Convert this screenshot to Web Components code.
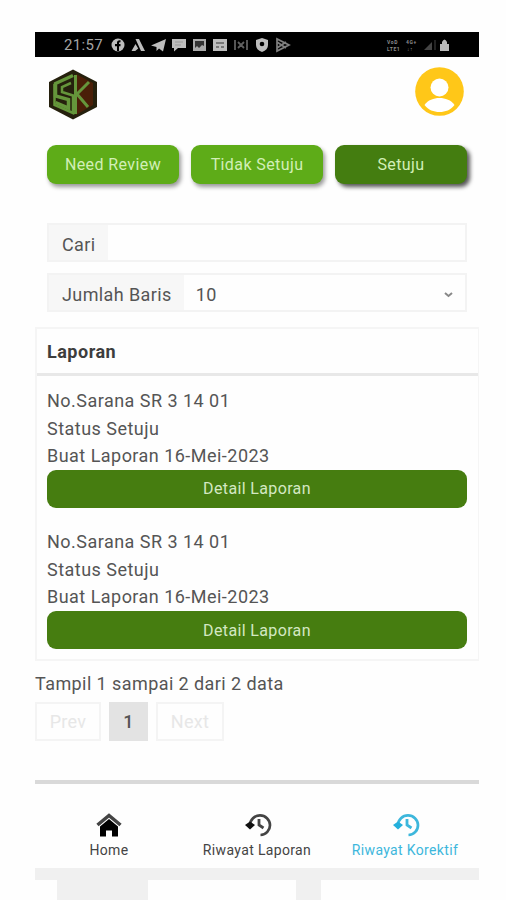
<!DOCTYPE html>
<html lang="id">
<head>
<meta charset="utf-8">
<title>Laporan</title>
<style>
html,body{margin:0;background:#fefefe}
body{width:506px;height:900px;overflow:hidden;font-family:Roboto,"Liberation Sans",sans-serif;color:#555}
</style>
</head>
<body>
<report-app></report-app>
<script>
const define = (name, css, html) => customElements.define(name, class extends HTMLElement {
  connectedCallback() {
    if (this.shadowRoot) return;
    const root = this.attachShadow({mode: 'open'});
    const t = document.createElement('template');
    t.innerHTML = `<style>*{box-sizing:border-box}${css}</style>${typeof html === 'function' ? html(this) : html}`;
    root.append(t.content.cloneNode(true));
  }
});

define('status-bar', `
:host{display:flex;align-items:center;height:25px;background:#000;color:#a5a5a5;padding:0 29px;font-size:15px;line-height:25px;margin-top:32px}
svg{display:block}.time{width:39px;margin-right:8px;padding-top:2px;letter-spacing:.35px}.icons{flex:1}`, `
<span class="time">21:57</span>
<div class="icons"><svg width="186" height="16" viewBox="0 0 186 16" fill="#bdbdbd">
<circle cx="7" cy="8" r="6.5"/><path d="M6 14V9.3H4V7h2V5.6C6 4 7 3 9.5 3.3v2C8.4 5.1 8 5.4 8 6v1h1.5v2.3H8V14z" fill="#000"/>
<path d="M24.500 2h3.500l6 12h-4zM20.500 14l4-7 2.700 4.500-3 2.500z"/>
<path d="M40 8.500L55 2l-3 12.500-4-3-2.500 2.500V10z"/>
<path d="M61 2h14v9h-8l-4 3.500V11h-2z"/><path d="M64 5h8M64 8h6" stroke="#999"/>
<path d="M82 2h13v12H82z" fill="#aaa"/><path d="M84 4h9v5l-2-1-3 3-2-2-2 2z" fill="#333"/>
<path d="M102 2h14v12h-14z"/><path d="M105 5h8v2h-8zm0 4h3v2h-3zm5 0h3v2h-3z" fill="#777"/>
<g fill="none" stroke="#606060" stroke-width="1.800"><path d="M124 3v10M127 5l3 3-3 3M136 3v10M133 5l-3 3 3 3"/></g>
<path d="M151 1l6 2v5c0 3.500-2 5.500-6 7-4-1.500-6-3.500-6-7V3z"/><circle cx="151" cy="7" r="2.300" fill="#000"/>
<path d="M166 2v12l12-6zM166 5l9 6M166 11l9-6" fill="none" stroke="#808080" stroke-width="1.700"/>
</svg></div>
<svg width="64" height="16" viewBox="0 0 64 16"><g fill="#8c8c8c" font-family="Roboto,sans-serif" font-size="5" font-weight="700" letter-spacing=".6"><text x="1" y="7">VoD</text><text x="1" y="13.500">LTE1</text><text x="20" y="7">4G+</text><text x="21" y="13.500">↓↑</text></g><path d="M38 13h8V5z" fill="#444"/><path d="M49 3v10" stroke="#444"/><path d="M56 7V5q2.500-5 5 0v2h2v7h-9V7z" fill="#b9b9b9"/></svg>`);

define('brand-logo', `:host{display:block;width:50px;height:51px}svg{display:block}`, `
<svg width="50" height="51" viewBox="0 0 50 51"><path d="M25 .5L49 13v25L25 50.500 1 38V13z" fill="#25200d"/><path d="M28 5l17 9v22L28 46z" fill="#4a1f08"/>
<g fill="none" stroke="#65963b"><path d="M25 6.500L7.500 14.500V27l13 3.500V39L7.500 33.500" stroke-width="3.500"/><path d="M23 14l-9 4v5l11 3.500V44L6.500 36V15" stroke-width="2.500"/><path d="M27.500 6v39" stroke-width="3"/><path d="M41 13L29 25l11 13" stroke-width="3"/></g></svg>`);

define('user-avatar', `:host{display:block;width:49px;height:49px}svg{display:block}`, `
<svg width="49" height="49" viewBox="0 0 49 49"><circle cx="24.500" cy="24.500" r="24.300" fill="#ffc718"/><circle cx="24.500" cy="20.500" r="9" fill="#fff"/><path d="M9.500 38C13 33 18.500 31 24.500 31s11.500 2 15 7c-4 5-9 7-15 7s-11-2-15-7z" fill="#fff"/></svg>`);

define('filter-tab', `
:host{display:flex;align-items:center;justify-content:center;height:39px;border-radius:9px;background:#5eac18;color:#d2efb7;font-size:16px;letter-spacing:.4px;box-shadow:2px 3px 4px #0006}
:host([active]){background:#447d10;box-shadow:3px 3px 4px #000a}`, `<slot></slot>`);

define('input-group', `
:host{display:flex;height:39px;border:2px solid #f3f3f3;background:#fefefe;font-size:18px;letter-spacing:.4px}
.l{background:#f7f7f7;padding:3px 12px 0 13px;display:flex;align-items:center}.v{flex:1;display:flex;align-items:center;justify-content:space-between;padding:4px 12px 0 12px}`,
el => `<span class="l">${el.getAttribute('label')}</span><span class="v"><slot></slot>${el.hasAttribute('select') ? '<svg width="9" height="6" viewBox="0 0 9 6"><path d="M1 1l3.500 3L8 1" fill="none" stroke="#888" stroke-width="2"/></svg>' : ''}</span>`);

define('report-item', `
:host{display:block;font-size:18px;line-height:27.600px;letter-spacing:.47px}
button{display:block;width:100%;height:38px;margin:0;border:0;border-radius:9px;background:#467d10;color:#d4e8c2;font:400 16px Roboto,sans-serif;letter-spacing:.36px}`,
`<slot></slot><button>Detail Laporan</button>`);

define('report-table', `
:host{display:block;height:334px;border:2px solid #f5f5f5;border-right-width:1px}
header{height:47px;border-bottom:3px solid #e8e8e8;padding:0 10px;line-height:45px;font-size:18px;font-weight:700;color:#3d3d3d;letter-spacing:.5px}
.rows{display:flex;flex-direction:column;gap:20.500px;padding:11px 11px 0 10px}`,
`<header>Laporan</header><div class="rows"><slot></slot></div>`);

define('page-nav', `
:host{display:flex;gap:8px;height:39px;font-size:18px}
span{display:flex;align-items:center;justify-content:center;border:2px solid #f4f4f4;color:#e7e7e7;letter-spacing:.3px}
.p{width:66px}.c{width:39px;background:#e3e3e3;border-color:#e3e3e3;color:#555;font-weight:500}.n{width:68px}`,
`<span class="p">Prev</span><span class="c">1</span><span class="n">Next</span>`);

const icons = {
  home: '<path d="M1.500 12L13 2.500l11.500 9.500" fill="none" stroke="#444" stroke-width="3.500"/><path d="M4 13.500L13 6l9 7.500V23.500H16v-6h-6v6H4z" fill="#000"/>',
  history: '<g transform="translate(1.500)"><path d="M4.500 12A10 9.800 0 1 1 15 22" fill="none" stroke="currentColor" stroke-width="2.700"/><path d="M-.5 12l5-3.500 5 3.500-5 4.500z" fill="var(--tip)"/><path d="M13.500 6v6l4.500 3" fill="none" stroke="currentColor" stroke-width="2.800"/></g>'
};
define('nav-item', `
:host{display:flex;flex-direction:column;align-items:center;color:#444;--tip:#111;font-size:14px;line-height:18px;gap:4px;letter-spacing:.35px;white-space:nowrap}
:host([active]){color:#3db7dc;--tip:#24b0dc}svg{display:block;overflow:visible}`,
el => `<svg width="26" height="24" viewBox="0 0 26 24">${icons[el.getAttribute('icon')]}</svg><span><slot></slot></span>`);

define('bottom-nav', `
:host{display:grid;grid-template-columns:148px 148px 148px;height:88px;padding-top:29px;border-top:4px solid #d9d9d9}`, `<slot></slot>`);

define('page-edge', `:host{display:grid;grid-template-columns:22px 91px 148px 25px 1fr;grid-template-rows:12px 20px;height:32px}.top{grid-column:1/-1;background:#f0f0f0}.a{grid-column:2}.b{grid-column:4}.a,.b{background:#f0f0f0;grid-row:2}`,
`<div class="top"></div><div class="a"></div><div class="b"></div>`);

define('report-app', `
:host{display:flow-root;width:444px;margin-left:35px}
.head{display:flex;justify-content:space-between;align-items:center;height:71px;padding:0 15px 0 13px;margin-bottom:17px}
brand-logo{margin-top:4px}user-avatar{margin-top:-2px}
.tabs{display:grid;grid-template-columns:repeat(3,132px);gap:12px;margin-left:12px}
.filters{display:grid;gap:11px;margin:39px 12px 15px}
.info{font-size:18px;line-height:24px;margin:11px 0 6px;letter-spacing:.42px}
bottom-nav{margin-top:39px}`,
`<status-bar></status-bar>
<div class="head"><brand-logo></brand-logo><user-avatar></user-avatar></div>
<div class="tabs"><filter-tab>Need Review</filter-tab><filter-tab>Tidak Setuju</filter-tab><filter-tab active>Setuju</filter-tab></div>
<div class="filters"><input-group label="Cari"></input-group><input-group label="Jumlah Baris" select>10</input-group></div>
<report-table>
<report-item><div>No.Sarana SR 3 14 01</div><div>Status Setuju</div><div>Buat Laporan 16-Mei-2023</div></report-item>
<report-item><div>No.Sarana SR 3 14 01</div><div>Status Setuju</div><div>Buat Laporan 16-Mei-2023</div></report-item>
</report-table>
<div class="info">Tampil 1 sampai 2 dari 2 data</div>
<page-nav></page-nav>
<bottom-nav><nav-item icon="home">Home</nav-item><nav-item icon="history">Riwayat Laporan</nav-item><nav-item icon="history" active>Riwayat Korektif</nav-item></bottom-nav>
<page-edge></page-edge>`);
</script>
</body>
</html>
